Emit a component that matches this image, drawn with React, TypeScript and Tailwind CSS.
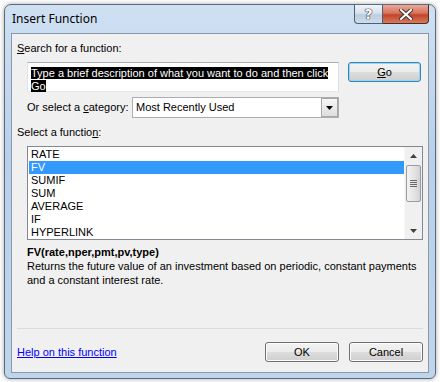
import React from 'react';

const items = ['RATE', 'FV', 'SUMIF', 'SUM', 'AVERAGE', 'IF', 'HYPERLINK'];

const btn =
  'flex items-center justify-center w-[74px] h-[20px] rounded-[3px] border border-[#707070] bg-[linear-gradient(to_bottom,#f2f2f2_0%,#ebebeb_50%,#dddddd_50%,#cfcfcf_100%)] shadow-[inset_0_0_0_1px_#fbfbfb]';

const Tri: React.FC<{ up?: boolean; color?: string }> = ({ up, color = '#000' }) => (
  <svg width="7" height="4" viewBox="0 0 7 4">
    <path d={up ? 'M3.5 0 L7 4 L0 4 Z' : 'M0 0 L7 0 L3.5 4 Z'} fill={color} />
  </svg>
);

const App: React.FC = () => {
  return (
    <div className="w-[440px] h-[382px] overflow-hidden bg-[#fdfdfd] pt-[4px] pl-[4px]">
      {/* window frame */}
      <div className="w-[432px] h-[375px] rounded-t-[7px] rounded-b-[6px] border border-[#5b6b7d] bg-[linear-gradient(to_bottom,#cfe0f2_0%,#b8d0ea_40%,#bfd5ec_100%)] px-[6px] pb-[5px] shadow-[0_0_4px_rgba(0,0,0,0.35)] flex flex-col">
        {/* title bar */}
        <div className="h-[28px] flex items-start">
          <span className="pl-[1px] pt-[6px] leading-[16px] text-[12px] text-black font-['Noto_Sans',sans-serif]">
            Insert Function
          </span>
          <div className="ml-auto flex">
            <div className="w-[29px] h-[19px] border border-t-0 border-[#4d5f75] rounded-bl-[4px] bg-[linear-gradient(to_bottom,#eef3f8_0%,#d7e2ee_45%,#bccde0_55%,#cfdcea_100%)] flex items-center justify-center">
              <span className="text-[14px] leading-none font-bold text-white font-['DejaVu_Sans',sans-serif] [text-shadow:0_0_1px_#333,0_0_1px_#333,0_0_1px_#333]">
                ?
              </span>
            </div>
            <div className="w-[46px] h-[19px] border border-t-0 border-l-0 border-[#4d2a24] rounded-br-[4px] bg-[linear-gradient(to_bottom,#e9a797_0%,#d9735d_45%,#c2442b_55%,#d67a5c_100%)] flex items-center justify-center">
              <svg width="14" height="11" viewBox="0 0 14 11">
                <path d="M2 1 L12 10 M12 1 L2 10" stroke="#3a3a3a" strokeWidth="4" strokeLinecap="square" />
                <path d="M2 1 L12 10 M12 1 L2 10" stroke="#fff" strokeWidth="2" strokeLinecap="square" />
              </svg>
            </div>
          </div>
        </div>

        {/* client area */}
        <div className="w-[418px] h-[340px] border border-[#8c99a8] bg-[#f0f0f0] text-[11px] leading-[13px] text-black font-['Liberation_Sans',Arial,sans-serif] flex flex-col pl-[5px]">
          <div className="mt-[8px] h-[13px]">
            <u>S</u>earch for a function:
          </div>

          <div className="mt-[7px] flex items-start">
            <div className="ml-[10px] w-[312px] h-[30px] border border-[#abadb3] border-l-[#e2e3ea] border-r-[#dbdfe6] border-b-[#e3e9ef] bg-white pl-[3px] pt-[4px] whitespace-nowrap">
              <span className="bg-black text-white">Type a brief description of what you want to do and then click </span>
              <br />
              <span className="bg-black text-white">Go</span>
            </div>
            <div className="ml-[9px] w-[73px] h-[20px] rounded-[3px] border border-[#3c7fb1] bg-[linear-gradient(to_bottom,#f2f2f2_0%,#ebebeb_50%,#dddddd_50%,#cfcfcf_100%)] shadow-[inset_0_0_0_1px_#8fd8f8] flex items-center justify-center">
              <span>
                <u>G</u>o
              </span>
            </div>
          </div>

          <div className="mt-[5px] flex items-center h-[21px]">
            <span className="ml-[10px] w-[105px]">
              Or select a <u>c</u>ategory:
            </span>
            <div className="w-[207px] h-[21px] border border-[#abadb3] bg-white flex items-center">
              <span className="pl-[3px] flex-1">Most Recently Used</span>
              <div className="w-[17px] h-[19px] border border-[#a7a7a7] bg-[linear-gradient(to_bottom,#f6f6f6,#dedede)] flex items-center justify-center">
                <Tri />
              </div>
            </div>
          </div>

          <div className="mt-[8px] h-[13px]">
            Select a functio<u>n</u>:
          </div>

          {/* list box */}
          <div className="mt-[7px] ml-[10px] w-[396px] h-[94px] border border-[#828790] bg-white flex">
            <div className="flex-1 pt-[1px] pl-[1px]">
              {items.map((it) => (
                <div
                  key={it}
                  className={
                    it === 'FV'
                      ? 'h-[13px] pl-[2px] bg-[#3399ff] text-white'
                      : 'h-[13px] pl-[2px]'
                  }
                >
                  {it}
                </div>
              ))}
            </div>
            <div className="w-[18px] h-full bg-[#f0f0f0] flex flex-col items-center border-l border-[#f7f7f7]">
              <div className="h-[17px] flex items-center justify-center">
                <Tri up color="#404040" />
              </div>
              <div className="mt-[1px] w-[15px] h-[37px] rounded-[2px] border border-[#979ca4] bg-[linear-gradient(to_right,#f3f3f3,#e2e2e2_60%,#d3d3d3)] flex flex-col items-center justify-center gap-[1px]">
                <div className="w-[7px] h-[1px] bg-[#6b6b6b]" />
                <div className="w-[7px] h-[1px] bg-[#6b6b6b]" />
                <div className="w-[7px] h-[1px] bg-[#6b6b6b]" />
                <div className="w-[7px] h-[1px] bg-[#6b6b6b]" />
              </div>
              <div className="mt-auto h-[17px] flex items-center justify-center">
                <Tri color="#404040" />
              </div>
            </div>
          </div>

          <div className="mt-[6px] ml-[10px] h-[13px] font-bold">FV(rate,nper,pmt,pv,type)</div>
          <div className="ml-[10px] leading-[14px] whitespace-nowrap">
            Returns the future value of an investment based on periodic, constant payments
            <br />
            and a constant interest rate.
          </div>

          <div className="mt-[41px] w-[406px] h-[1px] bg-[#d5dde5]" />

          <div className="mt-[13px] h-[20px] flex items-center w-[406px]">
            <span className="text-[#0000ff] underline">Help on this function</span>
            <div className={btn + ' ml-auto'}>OK</div>
            <div className={btn + ' ml-[10px]'}>Cancel</div>
          </div>
        </div>
      </div>
    </div>
  );
};

export default App;
